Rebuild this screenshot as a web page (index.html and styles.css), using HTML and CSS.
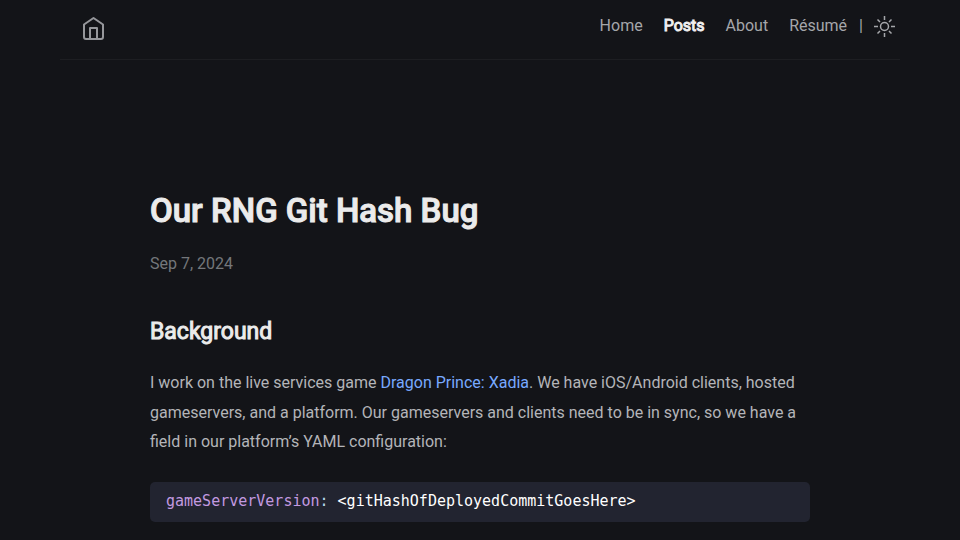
FILE: index.html
```html
<!DOCTYPE html>
<html lang="en">
<head>
<meta charset="utf-8">
<meta name="viewport" content="width=device-width, initial-scale=1">
<title>Our RNG Git Hash Bug</title>
<link rel="stylesheet" href="styles.css">
</head>
<body>
<header class="site-header">
  <a class="home-link" href="#" aria-label="Home page">
    <svg width="24" height="28" viewBox="0 0 24 28" fill="none" stroke="currentColor" stroke-width="2" stroke-linejoin="round">
      <path d="M2 10.500 11.500 4l9.500 6.500V23a2 2 0 0 1-2 2h-15a2 2 0 0 1-2-2z"/>
      <path d="M8 25V14h7v11"/>
    </svg>
  </a>
  <nav class="site-nav">
    <a href="#">Home</a>
    <a class="active" href="#">Posts</a>
    <a href="#">About</a>
    <a href="#">Résumé</a>
    <span class="divider">|</span>
    <button class="theme-toggle" type="button" aria-label="Toggle theme">
      <svg width="22" height="22" viewBox="0 0 22 22" fill="none" stroke="currentColor" stroke-width="1.500">
        <circle cx="10.500" cy="11.500" r="4"/>
        <path d="M10.500 1v4M10.500 18v4M0 11.500h4M17 11.500h4M3.500 4.500l2.500 2.500M15 16l2.500 2.500M3.500 18.500 6 16M15 7l2.500-2.500"/>
      </svg>
    </button>
  </nav>
</header>
<main class="post">
  <h1>Our RNG Git Hash Bug</h1>
  <time class="date" datetime="2024-09-07">Sep 7, 2024</time>
  <h2>Background</h2>
  <p>I work on the live services game <a href="#">Dragon Prince: Xadia</a>. We have iOS/Android clients, hosted gameservers, and a platform. Our gameservers and clients need to be in sync, so we have a field in our platform’s YAML configuration:</p>
  <pre><code><span class="key">gameServerVersion</span><span class="colon">:</span> &lt;gitHashOfDeployedCommitGoesHere&gt;</code></pre>
</main>
</body>
</html>
```
FILE: styles.css
```css
* {
  box-sizing: border-box;
}

body {
  margin: 0;
  background: #131418;
  color: #b4b5b9;
  font-family: Roboto, sans-serif;
  font-size: 16px;
}

a {
  color: inherit;
  text-decoration: none;
}

.site-header {
  display: flex;
  align-items: flex-start;
  justify-content: space-between;
  max-width: 840px;
  min-height: 60px;
  margin: 0 auto;
  padding: 14px 4px 0 22px;
  border-bottom: 1px solid #1d1e22;
}

.home-link {
  display: flex;
  color: #96979b;
}

.site-nav {
  display: flex;
  align-items: center;
  color: #a5a6aa;
  line-height: 24px;
}

.site-nav a {
  margin-right: 21px;
}

.site-nav a:nth-of-type(4) {
  margin-right: 12px;
}

.site-nav .active {
  color: #f0f0f0;
  -webkit-text-stroke: 1px;
}

.theme-toggle {
  display: flex;
  margin-left: 11px;
  padding: 0;
  border: 0;
  background: none;
  color: inherit;
}

.post {
  max-width: 660px;
  margin: 0 auto;
  padding: 130px 0 18px;
}

h1,
h2 {
  color: #ebebeb;
  font-weight: 400;
  -webkit-text-stroke: 1px;
}

h1 {
  margin: 0;
  font-size: 33px;
  font-weight: 500;
  line-height: 42px;
}

.date {
  display: block;
  margin-top: 16px;
  color: #74777b;
  line-height: 32px;
}

h2 {
  margin: 37px 0 21px;
  font-size: 23px;
  line-height: 30px;
}

p {
  margin: 0;
  line-height: 1.85;
}

p a {
  color: #78a9ff;
}

pre {
  margin: 25px 0 0;
  padding: 7px 16px 9px;
  border-radius: 5px;
  background: #222430;
  color: #fff;
  font: 15px/24px "DejaVu Sans Mono", monospace;
}

code {
  font: inherit;
}

.key {
  color: #c39ae0;
}

.colon {
  color: #b5d9e8;
}
```
